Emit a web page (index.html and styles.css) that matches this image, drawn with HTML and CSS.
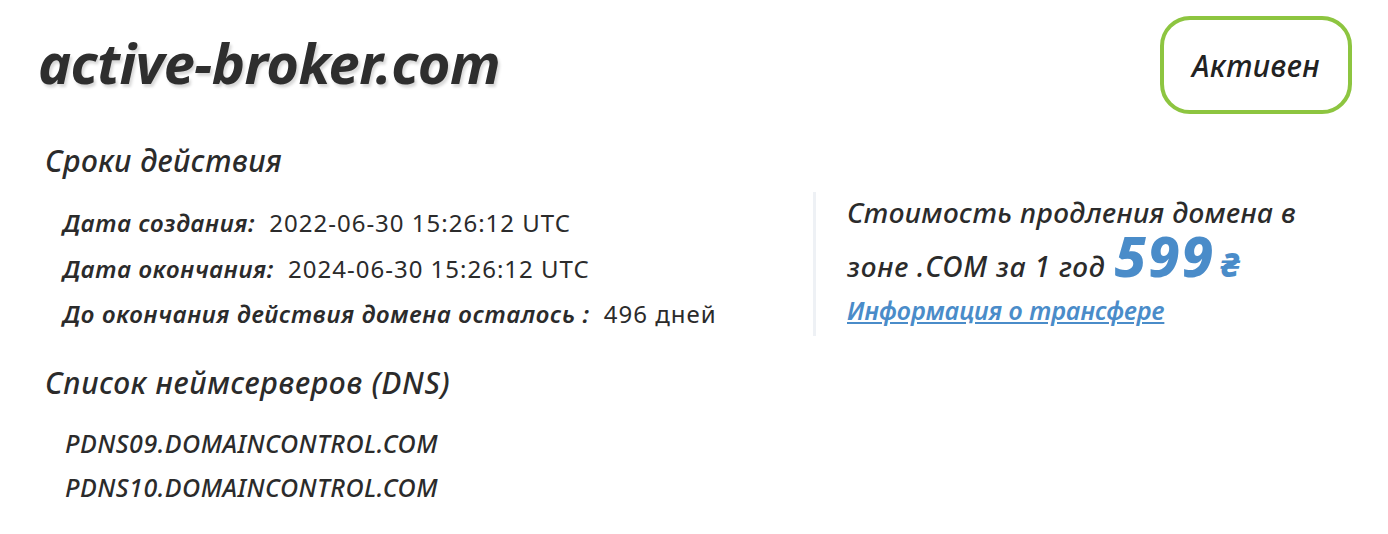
FILE: index.html
```html
<!DOCTYPE html>
<html lang="ru">
<head>
<meta charset="utf-8">
<link rel="stylesheet" href="styles.css">
</head>
<body>
<div class="page">
  <div class="header">
    <h1 class="domain">active-broker.com</h1>
    <div class="status">Активен</div>
  </div>
  <h2 class="section-title">Сроки действия</h2>
  <div class="terms">
    <div class="dates">
      <div class="row"><span class="label">Дата создания:</span><span class="value">2022-06-30 15:26:12 UTC</span></div>
      <div class="row"><span class="label">Дата окончания:</span><span class="value">2024-06-30 15:26:12 UTC</span></div>
      <div class="row"><span class="label">До окончания действия домена осталось :</span><span class="value">496 дней</span></div>
    </div>
    <div class="price">
      <p class="price-text">Стоимость продления домена в</p>
      <p class="price-line"><span>зоне .COM за 1 год</span><span class="amount">599</span><span class="currency">₴</span></p>
      <a class="transfer" href="#">Информация о трансфере</a>
    </div>
  </div>
  <h2 class="section-title dns-title">Список неймсерверов (DNS)</h2>
  <div class="dns">
    <div class="ns">PDNS09.DOMAINCONTROL.COM</div>
    <div class="ns">PDNS10.DOMAINCONTROL.COM</div>
  </div>
</div>
</body>
</html>
```
FILE: styles.css
```css
* { box-sizing: border-box; }
html, body { margin: 0; padding: 0; background: #fff; }
body {
  font-family: "Noto Sans", "DejaVu Sans", sans-serif;
  color: #2b2b2b;
}
.page {
  padding: 16px 36px 0 38px;
}
.header {
  display: flex;
  justify-content: space-between;
  align-items: flex-start;
}
.domain {
  margin: 14px 0 0 0;
  font-size: 56px;
  font-style: italic;
  font-weight: 700;
  line-height: 64px;
  letter-spacing: -0.6px;
  color: #2e2e2e;
  text-shadow: 2px 3px 3px #d8d8d8;
}
.status {
  width: 192px;
  height: 98px;
  border: 4px solid #8dc540;
  border-radius: 30px;
  display: flex;
  align-items: center;
  justify-content: center;
  font-size: 30px;
  font-style: italic;
  font-weight: 500;
  letter-spacing: 0.4px;
  color: #222;
}
.section-title {
  margin: 29px 0 0 7px;
  font-size: 30px;
  line-height: 36px;
  font-style: italic;
  font-weight: 500;
  letter-spacing: 0.5px;
  color: #2b2b2b;
}
.terms {
  display: flex;
  margin-top: 13px;
}
.dates {
  width: 775px;
  padding: 16px 0 0 25px;
  display: flex;
  flex-direction: column;
  gap: 15.5px;
}
.row {
  display: flex;
  align-items: baseline;
  gap: 14px;
  font-size: 24px;
  line-height: 30px;
}
.label {
  font-style: italic;
  font-weight: 600;
  letter-spacing: 0.7px;
}
.value {
  font-weight: 400;
  letter-spacing: 1px;
}
.price {
  border-left: 3px solid #eef1f5;
  padding: 0 0 0 31px;
  height: 144px;
  display: flex;
  flex-direction: column;
  align-items: flex-start;
}
.price-text,
.price-line {
  margin: 0;
  font-size: 28px;
  line-height: 40px;
  font-style: italic;
  font-weight: 500;
  white-space: nowrap;
}
.price-text {
  letter-spacing: 0.4px;
}
.price-line {
  display: flex;
  align-items: baseline;
  letter-spacing: 0.8px;
}
.amount {
  font-size: 56px;
  font-weight: 800;
  color: #4a8cc9;
  letter-spacing: 2px;
  line-height: 47px;
  margin-left: 9px;
}
.currency {
  font-size: 34px;
  font-weight: 800;
  color: #4a8cc9;
  line-height: 40px;
  margin-left: 5px;
}
.transfer {
  display: block;
  margin-top: 9px;
  font-size: 25px;
  line-height: 30px;
  font-style: italic;
  font-weight: 600;
  color: #4a8cc9;
  text-decoration: underline;
}
.dns-title {
  margin-top: 29px;
  letter-spacing: 0.7px;
}
.dns {
  padding: 27px 0 0 27px;
  display: flex;
  flex-direction: column;
  gap: 14px;
}
.ns {
  font-size: 25px;
  line-height: 30px;
  font-style: italic;
  font-weight: 500;
  letter-spacing: 0.5px;
}
```
